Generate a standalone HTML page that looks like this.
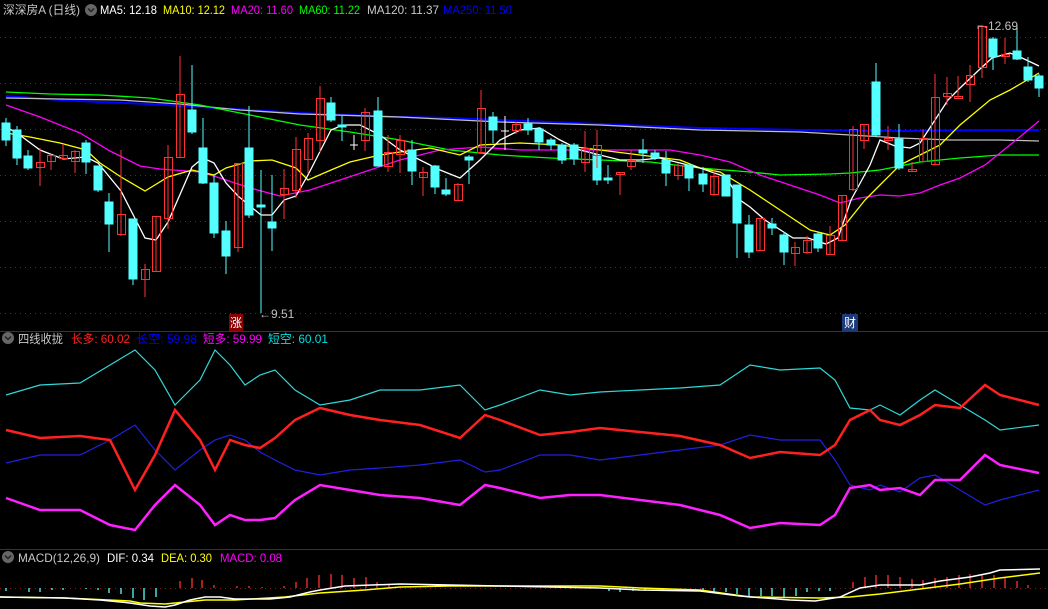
<!DOCTYPE html>
<html><head><meta charset="utf-8"><style>
html,body{margin:0;padding:0;background:#000;width:1048px;height:609px;overflow:hidden}
svg{display:block}
text{font-family:"Liberation Sans","Noto Sans CJK SC",sans-serif;font-size:12px}
</style></head><body>
<svg width="1048" height="609" viewBox="0 0 1048 609" xmlns="http://www.w3.org/2000/svg">
<rect width="1048" height="609" fill="#000"/>
<g stroke="#8a1a1a" stroke-dasharray="1,4" stroke-width="1">
<line x1="0" y1="37.5" x2="1048" y2="37.5"/><line x1="0" y1="83.5" x2="1048" y2="83.5"/>
<line x1="0" y1="129.5" x2="1048" y2="129.5"/><line x1="0" y1="175.5" x2="1048" y2="175.5"/>
<line x1="0" y1="221.5" x2="1048" y2="221.5"/><line x1="0" y1="267.5" x2="1048" y2="267.5"/>
<line x1="0" y1="313.5" x2="1048" y2="313.5"/>
<line x1="0" y1="588.5" x2="1048" y2="588.5"/>
</g>
<line x1="0" y1="331.5" x2="1048" y2="331.5" stroke="#b00000"/>
<line x1="0" y1="549.5" x2="1048" y2="549.5" stroke="#b00000"/>

<g fill="none" stroke-width="1.3">
<polyline stroke="#0000ff" stroke-width="2" points="6,96 60,100 100,102 150,104 200,107 250,110 300,113 350,115 400,117 450,118 500,120 550,122 600,124 700,128 800,130 900,131 1000,130 1039,130"/>
<polyline stroke="#c0c0c0" points="6,98 60,99 120,100 180,104 240,110 300,114 400,117 500,122 600,125 700,130 800,132 850,135 900,138 950,140 1000,140 1039,141"/>
<polyline stroke="#00ff00" points="6,92 50,94 100,95 150,98 200,105 250,115 300,125 350,132 400,140 450,150 500,155 550,158 600,160 650,162 700,168 750,172 780,175 830,174 850,173 880,170 920,162 960,158 1000,155 1039,155"/>
<polyline stroke="#ff00ff" points="6,105 40,117 80,133 110,151 140,166 160,169 200,172 220,178 250,188 280,196 310,190 340,180 370,170 400,160 440,150 480,147 520,150 560,150 600,150 640,150 670,150 700,155 730,162 760,175 790,185 820,195 840,203 860,198 880,195 900,196 920,193 940,185 960,178 985,165 1010,145 1039,121"/>
<polyline stroke="#ffff00" points="6,133 30,137 60,143 86,150 100,163 121,177 145,191 168,177 192,170 214,175 226,168 250,161 272,160 296,168 308,180 331,170 350,162 380,155 400,152 430,148 460,155 480,145 520,143 560,145 600,150 640,155 680,160 700,168 720,172 750,190 780,210 810,230 830,235 845,225 865,200 880,185 900,165 920,155 940,145 960,125 990,100 1010,90 1039,73"/>
<polyline stroke="#ffffff" points="6,127 17,133 40,150 63,159 86,157 98,163 121,191 145,238 156,240 168,222 192,167 203,158 214,163 226,183 238,196 261,215 272,215 284,200 296,196 308,175 331,130 343,125 360,125 380,135 400,150 420,160 440,170 460,178 480,160 500,140 520,130 540,128 560,140 580,150 600,155 620,160 640,160 660,158 680,163 700,168 726,177 740,200 750,207 765,220 793,238 808,238 826,244 838,238 851,200 870,165 880,140 895,146 910,148 920,143 935,120 948,100 960,88 980,69 992,58 1010,53 1020,57 1039,66"/>
</g>

<g stroke="#54ffff" fill="#54ffff">
<line x1="6" y1="118" x2="6" y2="146"/><rect x="2" y="123" width="8" height="17"/>
<line x1="17" y1="126" x2="17" y2="165"/><rect x="13" y="130" width="8" height="28"/>
<line x1="28" y1="150" x2="28" y2="170"/><rect x="24" y="156" width="8" height="12"/>
<line x1="86" y1="140" x2="86" y2="174"/><rect x="82" y="143" width="8" height="19"/>
<line x1="98" y1="166" x2="98" y2="192"/><rect x="94" y="166" width="8" height="24"/>
<line x1="109" y1="193" x2="109" y2="252"/><rect x="105" y="202" width="8" height="22"/>
<line x1="133" y1="219" x2="133" y2="285"/><rect x="129" y="219" width="8" height="60"/>
<line x1="192" y1="65" x2="192" y2="134"/><rect x="188" y="110" width="8" height="22"/>
<line x1="203" y1="118" x2="203" y2="184"/><rect x="199" y="148" width="8" height="35"/>
<line x1="214" y1="174" x2="214" y2="238"/><rect x="210" y="183" width="8" height="50"/>
<line x1="226" y1="221" x2="226" y2="274"/><rect x="222" y="231" width="8" height="25"/>
<line x1="249" y1="106" x2="249" y2="218"/><rect x="245" y="148" width="8" height="67"/>
<line x1="261" y1="170" x2="261" y2="313"/><rect x="257" y="205" width="8" height="2"/>
<line x1="272" y1="175" x2="272" y2="251"/><rect x="268" y="222" width="8" height="6"/>
<line x1="331" y1="97" x2="331" y2="122"/><rect x="327" y="103" width="8" height="17"/>
<line x1="342" y1="116" x2="342" y2="141"/><rect x="338" y="125" width="8" height="2"/>
<line x1="378" y1="97" x2="378" y2="166"/><rect x="374" y="111" width="8" height="55"/>
<line x1="412" y1="140" x2="412" y2="185"/><rect x="408" y="150" width="8" height="21"/>
<line x1="435" y1="165" x2="435" y2="194"/><rect x="431" y="166" width="8" height="21"/>
<line x1="446" y1="178" x2="446" y2="196"/><rect x="442" y="190" width="8" height="4"/>
<line x1="469" y1="155" x2="469" y2="184"/><rect x="465" y="157" width="8" height="3"/>
<line x1="493" y1="112" x2="493" y2="143"/><rect x="489" y="117" width="8" height="13"/>
<line x1="528" y1="118" x2="528" y2="135"/><rect x="524" y="124" width="8" height="6"/>
<line x1="539" y1="127" x2="539" y2="150"/><rect x="535" y="129" width="8" height="13"/>
<line x1="551" y1="138" x2="551" y2="150"/><rect x="547" y="140" width="8" height="5"/>
<line x1="562" y1="143" x2="562" y2="164"/><rect x="558" y="145" width="8" height="15"/>
<line x1="574" y1="143" x2="574" y2="165"/><rect x="570" y="145" width="8" height="14"/>
<line x1="597" y1="145" x2="597" y2="185"/><rect x="593" y="155" width="8" height="25"/>
<line x1="608" y1="165" x2="608" y2="184"/><rect x="604" y="178" width="8" height="2"/>
<line x1="643" y1="139" x2="643" y2="163"/><rect x="639" y="150" width="8" height="3"/>
<line x1="655" y1="150" x2="655" y2="160"/><rect x="651" y="153" width="8" height="5"/>
<line x1="666" y1="151" x2="666" y2="186"/><rect x="662" y="160" width="8" height="13"/>
<line x1="689" y1="165" x2="689" y2="191"/><rect x="685" y="165" width="8" height="13"/>
<line x1="703" y1="167" x2="703" y2="192"/><rect x="699" y="174" width="8" height="10"/>
<line x1="726" y1="175" x2="726" y2="196"/><rect x="722" y="175" width="8" height="21"/>
<line x1="737" y1="185" x2="737" y2="258"/><rect x="733" y="185" width="8" height="38"/>
<line x1="749" y1="215" x2="749" y2="258"/><rect x="745" y="225" width="8" height="27"/>
<line x1="772" y1="218" x2="772" y2="235"/><rect x="768" y="224" width="8" height="4"/>
<line x1="784" y1="232" x2="784" y2="265"/><rect x="780" y="235" width="8" height="17"/>
<line x1="818" y1="232" x2="818" y2="252"/><rect x="814" y="234" width="8" height="14"/>
<line x1="876" y1="63" x2="876" y2="137"/><rect x="872" y="82" width="8" height="53"/>
<line x1="899" y1="124" x2="899" y2="170"/><rect x="895" y="139" width="8" height="29"/>
<line x1="993" y1="37" x2="993" y2="70"/><rect x="989" y="39" width="8" height="18"/>
<line x1="1017" y1="26" x2="1017" y2="60"/><rect x="1013" y="51" width="8" height="8"/>
<line x1="1028" y1="57" x2="1028" y2="82"/><rect x="1024" y="67" width="8" height="13"/>
<line x1="1039" y1="74" x2="1039" y2="97"/><rect x="1035" y="76" width="8" height="12"/>
</g>
<g stroke="#fff"><line x1="354" y1="135" x2="354" y2="150"/><line x1="350" y1="145" x2="358" y2="145"/>
<line x1="505" y1="116" x2="505" y2="150"/><line x1="501" y1="131" x2="509" y2="131"/></g>
<g stroke="#ff3232" fill="none">
<line x1="40" y1="148" x2="40" y2="186"/><rect x="36.5" y="162.5" width="8" height="5"/>
<line x1="51" y1="154" x2="51" y2="170"/><rect x="47.5" y="155.5" width="8" height="6"/>
<line x1="63" y1="144" x2="63" y2="160"/><rect x="59.5" y="155.5" width="8" height="3"/>
<line x1="75" y1="150" x2="75" y2="173"/><rect x="71.5" y="151.5" width="8" height="10"/>
<line x1="121" y1="150" x2="121" y2="236"/><rect x="117.5" y="214.5" width="8" height="20"/>
<line x1="145" y1="264" x2="145" y2="297"/><rect x="141.5" y="269.5" width="8" height="10"/>
<line x1="156" y1="216" x2="156" y2="271"/><rect x="152.5" y="216.5" width="8" height="55"/>
<line x1="168" y1="145" x2="168" y2="229"/><rect x="164.5" y="157.5" width="8" height="61"/>
<line x1="180" y1="56" x2="180" y2="158"/><rect x="176.5" y="94.5" width="8" height="63"/>
<line x1="238" y1="163" x2="238" y2="252"/><rect x="234.5" y="163.5" width="8" height="84"/>
<line x1="284" y1="169" x2="284" y2="219"/><rect x="280.5" y="188.5" width="8" height="6"/>
<line x1="296" y1="137" x2="296" y2="198"/><rect x="292.5" y="149.5" width="8" height="41"/>
<line x1="308" y1="133" x2="308" y2="174"/><rect x="304.5" y="138.5" width="8" height="21"/>
<line x1="320" y1="86" x2="320" y2="152"/><rect x="316.5" y="98.5" width="8" height="42"/>
<line x1="365" y1="108" x2="365" y2="151"/><rect x="361.5" y="112.5" width="8" height="28"/>
<line x1="388" y1="135" x2="388" y2="172"/><rect x="384.5" y="152.5" width="8" height="14"/>
<line x1="400" y1="135" x2="400" y2="173"/><rect x="396.5" y="140.5" width="8" height="14"/>
<line x1="423" y1="167" x2="423" y2="196"/><rect x="419.5" y="172.5" width="8" height="5"/>
<line x1="458" y1="183" x2="458" y2="201"/><rect x="454.5" y="184.5" width="8" height="16"/>
<line x1="481" y1="90" x2="481" y2="153"/><rect x="477.5" y="108.5" width="8" height="44"/>
<line x1="516" y1="122" x2="516" y2="134"/><rect x="512.5" y="124.5" width="8" height="6"/>
<line x1="585" y1="131" x2="585" y2="172"/><rect x="581.5" y="148.5" width="8" height="14"/>
<line x1="597" y1="130" x2="597" y2="168"/><rect x="593.5" y="145.5" width="8" height="10"/>
<line x1="620" y1="172" x2="620" y2="195"/><rect x="616.5" y="172.5" width="8" height="2"/>
<line x1="631" y1="150" x2="631" y2="170"/><rect x="627.5" y="160.5" width="8" height="6"/>
<line x1="678" y1="163" x2="678" y2="180"/><rect x="674.5" y="165.5" width="8" height="10"/>
<line x1="714" y1="170" x2="714" y2="196"/><rect x="710.5" y="176.5" width="8" height="18"/>
<line x1="760" y1="218" x2="760" y2="250"/><rect x="756.5" y="218.5" width="8" height="32"/>
<line x1="795" y1="242" x2="795" y2="266"/><rect x="791.5" y="247.5" width="8" height="6"/>
<line x1="807" y1="236" x2="807" y2="254"/><rect x="803.5" y="240.5" width="8" height="12"/>
<line x1="830" y1="226" x2="830" y2="255"/><rect x="826.5" y="235.5" width="8" height="19"/>
<line x1="842" y1="195" x2="842" y2="240"/><rect x="838.5" y="195.5" width="8" height="45"/>
<line x1="853" y1="126" x2="853" y2="191"/><rect x="849.5" y="129.5" width="8" height="60"/>
<line x1="864" y1="124" x2="864" y2="149"/><rect x="860.5" y="124.5" width="8" height="16"/>
<line x1="888" y1="126" x2="888" y2="150"/><rect x="884.5" y="138.5" width="8" height="2"/>
<line x1="912" y1="162" x2="912" y2="172"/><rect x="908.5" y="169.5" width="8" height="2"/>
<line x1="923" y1="129" x2="923" y2="161"/><rect x="919.5" y="138.5" width="8" height="23"/>
<line x1="935" y1="74" x2="935" y2="164"/><rect x="931.5" y="97.5" width="8" height="67"/>
<line x1="947" y1="77" x2="947" y2="105"/><rect x="943.5" y="93.5" width="8" height="3"/>
<line x1="958" y1="76" x2="958" y2="98"/><rect x="954.5" y="96.5" width="8" height="2"/>
<line x1="970" y1="65" x2="970" y2="102"/><rect x="966.5" y="75.5" width="8" height="9"/>
<line x1="982" y1="26" x2="982" y2="78"/><rect x="978.5" y="26.5" width="8" height="41"/>
<line x1="1005" y1="38" x2="1005" y2="64"/><rect x="1001.5" y="54.5" width="8" height="2"/>
</g>
<text x="259" y="318" fill="#c0c0c0">←9.51</text>
<text x="977" y="30" fill="#c0c0c0">⌐-12.69</text>
<rect x="229" y="314" width="14" height="17" fill="#8a0000"/>
<text x="230" y="327" fill="#fff">涨</text>
<rect x="842" y="314" width="16" height="17" fill="#1a3a7a"/>
<text x="844" y="327" fill="#fff">财</text>

<text x="3" y="14" fill="#c8c8c8" textLength="77" lengthAdjust="spacingAndGlyphs">深深房A (日线)</text>
<circle cx="91" cy="10" r="6" fill="#666"/><path d="M88 8.5 L91 11.5 L94 8.5" stroke="#222" stroke-width="1.5" fill="none"/>
<text x="100" y="14" fill="#fff" textLength="57" lengthAdjust="spacingAndGlyphs">MA5: 12.18</text>
<text x="163" y="14" fill="#ffff00" textLength="62" lengthAdjust="spacingAndGlyphs">MA10: 12.12</text>
<text x="231" y="14" fill="#ff00ff" textLength="62" lengthAdjust="spacingAndGlyphs">MA20: 11.60</text>
<text x="299" y="14" fill="#00ff00" textLength="61" lengthAdjust="spacingAndGlyphs">MA60: 11.22</text>
<text x="367" y="14" fill="#c8c8c8" textLength="72" lengthAdjust="spacingAndGlyphs">MA120: 11.37</text>
<text x="443" y="14" fill="#0000ff" textLength="69" lengthAdjust="spacingAndGlyphs">MA250: 11.50</text>

<circle cx="8" cy="338" r="6" fill="#666"/><path d="M5 336.5 L8 339.5 L11 336.5" stroke="#222" stroke-width="1.5" fill="none"/>
<text x="18" y="343" fill="#c8c8c8" textLength="45" lengthAdjust="spacingAndGlyphs">四线收拢</text>
<text x="71" y="343" fill="#ff2020" textLength="59" lengthAdjust="spacingAndGlyphs">长多: 60.02</text>
<text x="136" y="343" fill="#0000ff" textLength="61" lengthAdjust="spacingAndGlyphs">长空: 59.98</text>
<text x="203" y="343" fill="#ff00ff" textLength="59" lengthAdjust="spacingAndGlyphs">短多: 59.99</text>
<text x="268" y="343" fill="#00e0e0" textLength="60" lengthAdjust="spacingAndGlyphs">短空: 60.01</text>
<g fill="none">
<polyline stroke="#30d8d8" stroke-width="1.2" points="6,395 40,385 80,383 110,365 135,350 155,370 175,405 200,380 215,350 230,365 245,385 260,375 275,370 295,390 320,405 350,400 380,390 420,390 460,385 485,410 500,405 540,390 570,395 600,392 640,390 680,388 720,385 750,365 780,370 820,368 835,380 850,408 870,410 880,405 900,415 920,400 935,390 960,405 985,420 1000,430 1039,425"/>
<polyline stroke="#2020e0" stroke-width="1.2" points="6,463 40,455 80,455 110,440 135,425 155,450 175,470 200,450 215,440 230,435 245,440 260,452 275,460 295,470 320,475 350,470 380,468 420,465 460,460 485,472 500,470 540,455 570,455 600,460 640,455 680,450 720,445 750,435 780,440 820,440 835,460 850,485 870,490 880,485 900,492 920,478 935,475 960,490 985,505 1000,500 1039,490"/>
<polyline stroke="#ff2020" stroke-width="2.5" points="6,430 40,438 80,436 110,440 135,490 155,455 175,410 200,440 215,470 230,440 245,445 260,448 275,438 295,420 320,408 350,415 380,420 420,425 460,438 485,415 500,420 540,435 570,432 600,428 640,432 680,436 720,445 750,458 780,452 820,455 835,445 850,420 870,410 880,420 900,425 920,415 935,405 960,408 985,385 1000,395 1039,405"/>
<polyline stroke="#ff20ff" stroke-width="2.5" points="6,498 40,510 80,510 110,525 135,530 155,505 175,485 200,505 215,525 230,515 245,520 260,520 275,518 295,500 320,485 350,490 380,495 420,498 460,505 485,485 500,488 540,498 570,495 600,495 640,500 680,505 720,515 750,528 780,523 820,525 835,515 850,488 870,485 880,490 900,488 920,495 935,480 960,480 985,455 1000,465 1039,473"/>
</g>

<circle cx="8" cy="557" r="6" fill="#666"/><path d="M5 555.5 L8 558.5 L11 555.5" stroke="#222" stroke-width="1.5" fill="none"/>
<text x="18" y="562" fill="#c8c8c8" textLength="82" lengthAdjust="spacingAndGlyphs">MACD(12,26,9)</text>
<text x="107" y="562" fill="#fff" textLength="47" lengthAdjust="spacingAndGlyphs">DIF: 0.34</text>
<text x="161" y="562" fill="#ffff00" textLength="51" lengthAdjust="spacingAndGlyphs">DEA: 0.30</text>
<text x="220" y="562" fill="#ff00ff" textLength="62" lengthAdjust="spacingAndGlyphs">MACD: 0.08</text>
<g stroke="#54ffff" stroke-width="1.3">
<line x1="6" y1="588" x2="6" y2="591"/><line x1="29" y1="588" x2="29" y2="592"/><line x1="40" y1="588" x2="40" y2="592"/><line x1="52" y1="588" x2="52" y2="590"/><line x1="63" y1="588" x2="63" y2="590"/><line x1="86" y1="588" x2="86" y2="589"/><line x1="98" y1="588" x2="98" y2="590"/><line x1="109" y1="588" x2="109" y2="593"/><line x1="121" y1="588" x2="121" y2="594"/><line x1="133" y1="588" x2="133" y2="598"/><line x1="144" y1="588" x2="144" y2="600"/><line x1="156" y1="588" x2="156" y2="597"/>
<line x1="609" y1="588" x2="609" y2="591"/><line x1="620" y1="588" x2="620" y2="592"/><line x1="633" y1="588" x2="633" y2="591"/><line x1="645" y1="588" x2="645" y2="590"/><line x1="703" y1="588" x2="703" y2="591"/><line x1="714" y1="588" x2="714" y2="592"/><line x1="726" y1="588" x2="726" y2="592"/><line x1="737" y1="588" x2="737" y2="594"/><line x1="749" y1="588" x2="749" y2="597"/><line x1="761" y1="588" x2="761" y2="596"/><line x1="772" y1="588" x2="772" y2="596"/><line x1="784" y1="588" x2="784" y2="597"/><line x1="796" y1="588" x2="796" y2="596"/><line x1="807" y1="588" x2="807" y2="592"/><line x1="819" y1="588" x2="819" y2="591"/><line x1="830" y1="588" x2="830" y2="591"/>
</g>
<g stroke="#ff3232" stroke-width="1.3">
<line x1="180" y1="588" x2="180" y2="581"/><line x1="192" y1="588" x2="192" y2="578"/><line x1="202" y1="588" x2="202" y2="580"/><line x1="214" y1="588" x2="214" y2="585"/><line x1="237" y1="588" x2="237" y2="586"/><line x1="249" y1="588" x2="249" y2="586"/><line x1="262" y1="588" x2="262" y2="587"/><line x1="284" y1="588" x2="284" y2="586"/><line x1="296" y1="588" x2="296" y2="582"/><line x1="307" y1="588" x2="307" y2="578"/><line x1="319" y1="588" x2="319" y2="575"/><line x1="331" y1="588" x2="331" y2="574"/><line x1="342" y1="588" x2="342" y2="575"/><line x1="354" y1="588" x2="354" y2="578"/><line x1="366" y1="588" x2="366" y2="577"/><line x1="377" y1="588" x2="377" y2="582"/><line x1="389" y1="588" x2="389" y2="584"/>
<line x1="853" y1="588" x2="853" y2="582"/><line x1="865" y1="588" x2="865" y2="577"/><line x1="876" y1="588" x2="876" y2="575"/><line x1="888" y1="588" x2="888" y2="575"/><line x1="900" y1="588" x2="900" y2="577"/><line x1="912" y1="588" x2="912" y2="579"/><line x1="923" y1="588" x2="923" y2="580"/><line x1="935" y1="588" x2="935" y2="578"/><line x1="947" y1="588" x2="947" y2="577"/><line x1="959" y1="588" x2="959" y2="575"/><line x1="970" y1="588" x2="970" y2="574"/><line x1="982" y1="588" x2="982" y2="574"/><line x1="994" y1="588" x2="994" y2="575"/><line x1="1005" y1="588" x2="1005" y2="578"/><line x1="1017" y1="588" x2="1017" y2="581"/><line x1="1028" y1="588" x2="1028" y2="585"/>
</g>
<g fill="none" stroke-width="1.5">
<polyline stroke="#ffff00" points="0,597 65,598 130,601 140,603 165,604 175,603 205,600 235,600 285,597 320,593 365,590 400,587 450,586 550,586 600,586 640,588 700,590 750,597 820,598 850,597 880,594 920,589 960,584 1000,578 1040,573"/>
<polyline stroke="#ffffff" points="0,597 65,598 100,600 130,603 150,606 165,607 175,605 190,600 205,597 220,597 235,599 270,599 290,597 310,592 320,590 345,586 400,584 450,585 500,586 550,587 600,588 640,590 700,591 740,596 790,600 815,601 840,597 860,588 880,585 920,585 940,581 970,577 990,573 1000,570 1040,569"/>
</g>
</svg>
</body></html>
